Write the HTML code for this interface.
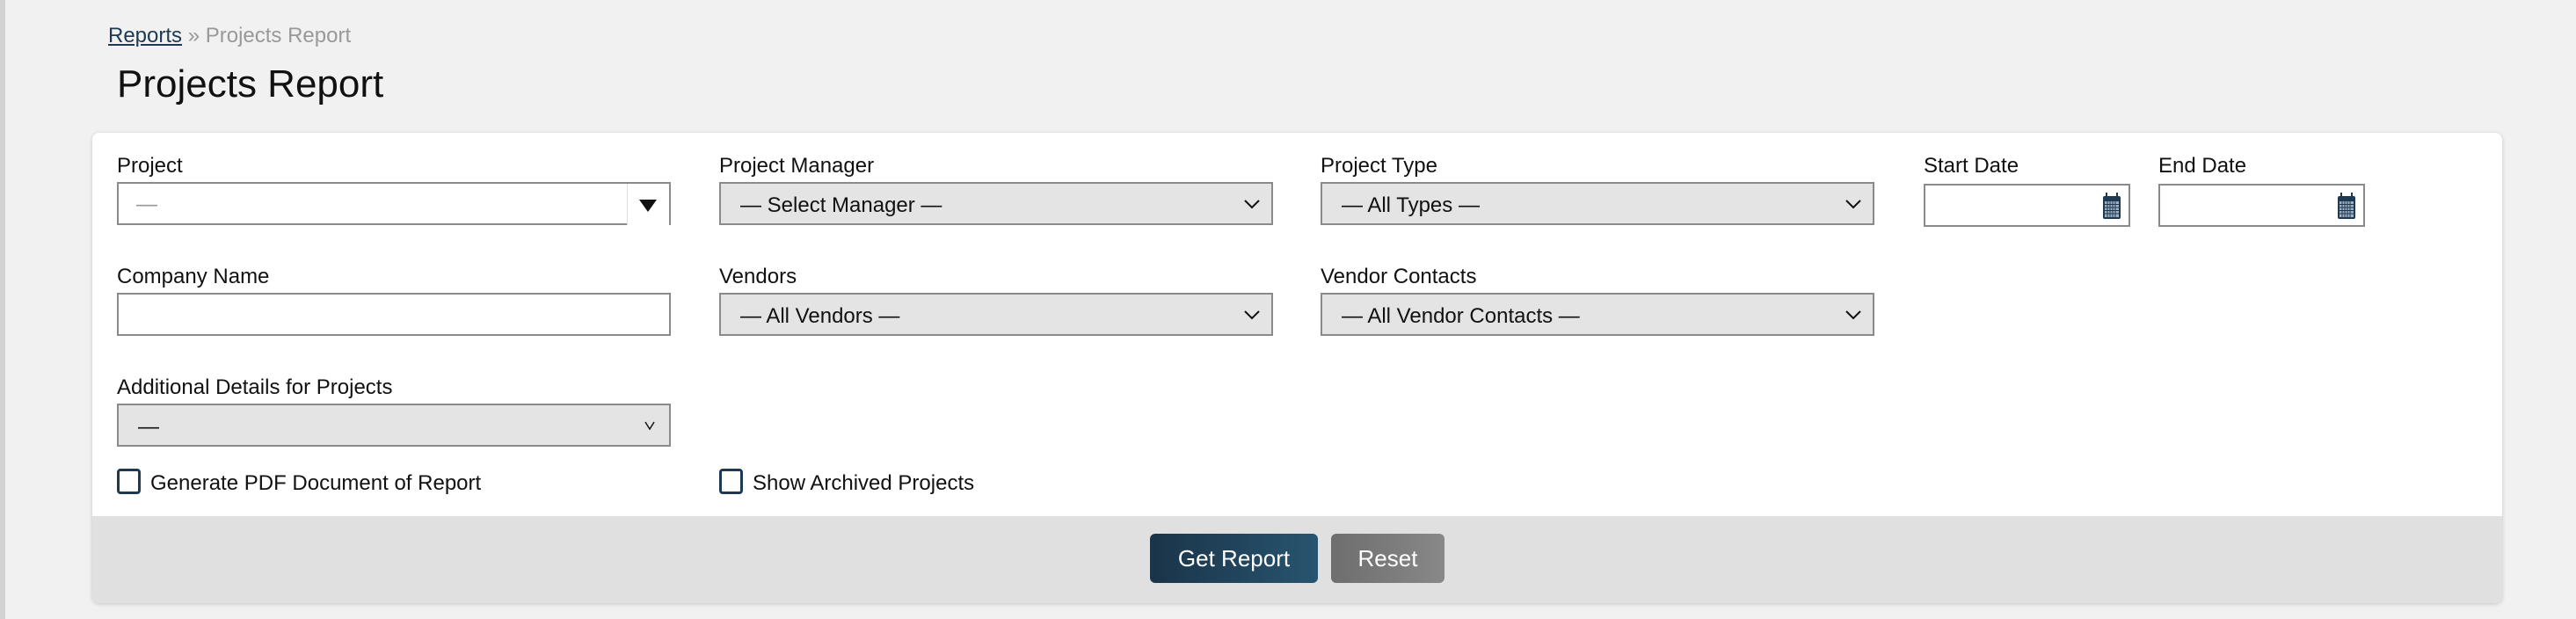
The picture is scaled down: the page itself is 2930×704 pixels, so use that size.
<!DOCTYPE html>
<html><head><meta charset="utf-8">
<style>
*{box-sizing:border-box;margin:0;padding:0}
body{width:2930px;height:704px;background:#f1f1f1;font-family:"Liberation Sans",sans-serif;position:relative;overflow:hidden;color:#111}
.stripe{position:absolute;left:0;top:0;width:6px;height:704px;background:#d2d2d2}
.abs{position:absolute}
.crumb{left:123px;top:27px;font-size:24px;color:#999}
.crumb a{color:#1d3a52;text-decoration:underline}
h1{position:absolute;left:133px;top:71px;font-size:44px;font-weight:normal;color:#111}
.card{position:absolute;left:105px;top:151px;width:2741px;height:535px;background:#fff;border-radius:8px;box-shadow:0 1px 5px rgba(0,0,0,.18);overflow:hidden}
.foot{position:absolute;left:0;top:436px;width:100%;height:99px;background:#e0e0e0}
.lbl{position:absolute;font-size:24px;color:#111}
.inp{position:absolute;height:49px;background:#fff;border:2px solid #8a8a8a}
.sel{position:absolute;height:49px;background:#e4e4e4;border:2px solid #8a8a8a;font-size:24px;padding:11px 22px;color:#111}
.sel svg{position:absolute;right:12px;top:16px}
.cb{position:absolute;width:27px;height:29px;border:3px solid #1d3a52;border-radius:4px;background:#fff}
.btn{position:absolute;height:56px;border-radius:6px;color:#fff;font-size:26px;text-align:center;line-height:56px}
</style></head><body>
<div class="stripe"></div>
<div class="abs crumb"><a>Reports</a> » Projects Report</div>
<h1>Projects Report</h1>
<div class="card">
  <div class="lbl" style="left:28px;top:24px">Project</div>
  <div class="inp" style="left:28px;top:56px;width:630px">
    <div class="abs" style="left:20px;top:10px;font-size:24px;color:#999">—</div>
    <div class="abs" style="right:0;top:0;width:48px;height:47px;border-left:1px solid #ddd;background:#fff"></div>
    <svg class="abs" style="right:14px;top:18px" width="20" height="14"><path d="M0 0H20L10 14Z" fill="#111"/></svg>
  </div>
  <div class="lbl" style="left:713px;top:24px">Project Manager</div>
  <div class="sel" style="left:713px;top:56px;width:630px">— Select Manager —<svg width="20" height="14"><path d="M2 3L10 11L18 3" stroke="#111" stroke-width="2" fill="none"/></svg></div>
  <div class="lbl" style="left:1397px;top:24px">Project Type</div>
  <div class="sel" style="left:1397px;top:56px;width:630px">— All Types —<svg width="20" height="14"><path d="M2 3L10 11L18 3" stroke="#111" stroke-width="2" fill="none"/></svg></div>
  <div class="lbl" style="left:2083px;top:24px">Start Date</div>
  <div class="inp" style="left:2083px;top:58px;width:235px">
    <svg class="abs" style="right:8px;top:7px" width="22" height="32"><rect x="1" y="5" width="20" height="26" rx="2" fill="#1d3a52"/><rect x="4" y="1" width="2" height="7" fill="#1d3a52"/><rect x="16" y="1" width="2" height="7" fill="#1d3a52"/><rect x="3" y="11" width="16" height="18" fill="#9fb0c0"/><path d="M3 14.5H19M3 18H19M3 21.5H19M3 25H19M6 11V29M9 11V29M12 11V29M15 11V29" stroke="#1d3a52" stroke-width="1"/></svg>
  </div>
  <div class="lbl" style="left:2350px;top:24px">End Date</div>
  <div class="inp" style="left:2350px;top:58px;width:235px">
    <svg class="abs" style="right:8px;top:7px" width="22" height="32"><rect x="1" y="5" width="20" height="26" rx="2" fill="#1d3a52"/><rect x="4" y="1" width="2" height="7" fill="#1d3a52"/><rect x="16" y="1" width="2" height="7" fill="#1d3a52"/><rect x="3" y="11" width="16" height="18" fill="#9fb0c0"/><path d="M3 14.5H19M3 18H19M3 21.5H19M3 25H19M6 11V29M9 11V29M12 11V29M15 11V29" stroke="#1d3a52" stroke-width="1"/></svg>
  </div>

  <div class="lbl" style="left:28px;top:150px">Company Name</div>
  <div class="inp" style="left:28px;top:182px;width:630px"></div>
  <div class="lbl" style="left:713px;top:150px">Vendors</div>
  <div class="sel" style="left:713px;top:182px;width:630px">— All Vendors —<svg width="20" height="14"><path d="M2 3L10 11L18 3" stroke="#111" stroke-width="2" fill="none"/></svg></div>
  <div class="lbl" style="left:1397px;top:150px">Vendor Contacts</div>
  <div class="sel" style="left:1397px;top:182px;width:630px">— All Vendor Contacts —<svg width="20" height="14"><path d="M2 3L10 11L18 3" stroke="#111" stroke-width="2" fill="none"/></svg></div>

  <div class="lbl" style="left:28px;top:276px">Additional Details for Projects</div>
  <div class="sel" style="left:28px;top:308px;width:630px">—<svg width="20" height="14"><path d="M5 3L10 11L15 3" stroke="#111" stroke-width="1.5" fill="none"/></svg></div>

  <div class="cb" style="left:28px;top:382px"></div>
  <div class="lbl" style="left:66px;top:385px">Generate PDF Document of Report</div>
  <div class="cb" style="left:713px;top:382px"></div>
  <div class="lbl" style="left:751px;top:385px">Show Archived Projects</div>

  <div class="foot">
    <div class="btn" style="left:1203px;top:20px;width:191px;background:linear-gradient(90deg,#1a3449,#28546f)">Get Report</div>
    <div class="btn" style="left:1409px;top:20px;width:129px;background:linear-gradient(90deg,#6e6e6e,#888)">Reset</div>
  </div>
</div>
</body></html>
